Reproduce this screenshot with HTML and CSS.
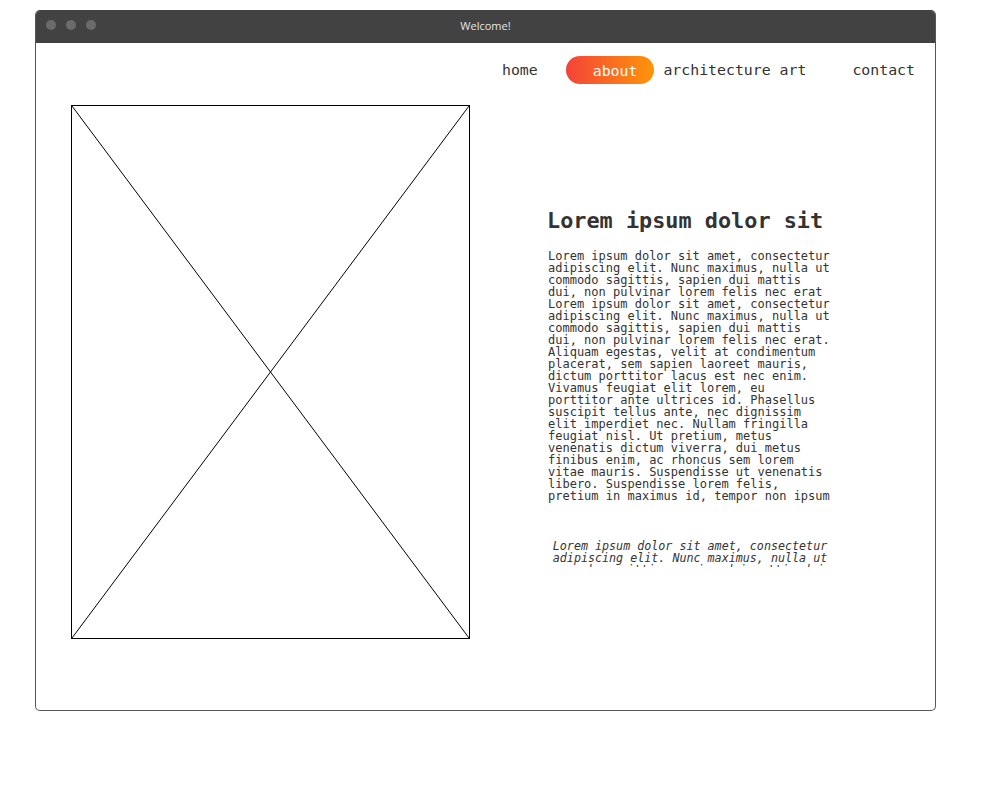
FILE: index.html
```html
<!DOCTYPE html>
<html lang="en">
<head>
<meta charset="utf-8">
<title>Welcome!</title>
<link rel="stylesheet" href="styles.css">
</head>
<body>
<div class="page">
  <div class="window">
    <div class="titlebar">
      <div class="dots"><span class="dot"></span><span class="dot"></span><span class="dot"></span></div>
      <div class="title">Welcome!</div>
    </div>
    <nav class="nav">
      <a class="nav-link home">home</a>
      <a class="nav-link active">about</a>
      <a class="nav-link arch">architecture art</a>
      <a class="nav-link contact">contact</a>
    </nav>
    <main class="main">
      <div class="placeholder">
        <svg class="cross" viewBox="0 0 397 532" preserveAspectRatio="none">
          <line x1="0" y1="0" x2="397" y2="532" stroke="#000" stroke-width="1"/>
          <line x1="397" y1="0" x2="0" y2="532" stroke="#000" stroke-width="1"/>
        </svg>
      </div>
      <section class="content">
        <h1 class="heading">Lorem ipsum dolor sit</h1>
        <p class="text">Lorem ipsum dolor sit amet, consectetur adipiscing elit. Nunc maximus, nulla ut commodo sagittis, sapien dui mattis dui, non pulvinar lorem felis nec erat Lorem ipsum dolor sit amet, consectetur adipiscing elit. Nunc maximus, nulla ut commodo sagittis, sapien dui mattis dui, non pulvinar lorem felis nec erat. Aliquam egestas, velit at condimentum placerat, sem sapien laoreet mauris, dictum porttitor lacus est nec enim. Vivamus feugiat elit lorem, eu porttitor ante ultrices id. Phasellus suscipit tellus ante, nec dignissim elit imperdiet nec. Nullam fringilla feugiat nisl. Ut pretium, metus venenatis dictum viverra, dui metus finibus enim, ac rhoncus sem lorem vitae mauris. Suspendisse ut venenatis libero. Suspendisse lorem felis, pretium in maximus id, tempor non ipsum</p>
        <p class="quote">Lorem ipsum dolor sit amet, consectetur adipiscing elit. Nunc maximus, nulla ut commodo sagittis, sapien dui mattis dui, non pulvinar lorem felis nec erat</p>
      </section>
    </main>
  </div>
</div>
</body>
</html>
```

FILE: styles.css
```css
html, body {
  margin: 0;
  padding: 0;
  background: #fff;
}

.page {
  padding: 10px 0 0 35px;
}

.window {
  box-sizing: border-box;
  width: 901px;
  height: 701px;
  border: 1px solid #555;
  border-top-color: #424242;
  border-radius: 5px;
  overflow: hidden;
  background: #fff;
  font-family: "DejaVu Sans Mono", "Liberation Mono", monospace;
  color: #333;
}

.titlebar {
  position: relative;
  height: 32px;
  background: #424242;
  display: flex;
  align-items: center;
  justify-content: center;
}

.dots {
  position: absolute;
  left: 10px;
  top: 9px;
  display: flex;
  gap: 10px;
}

.dot {
  width: 10px;
  height: 10px;
  border-radius: 50%;
  background: #6b6b6b;
}

.title {
  font-family: "Open Sans", "Noto Sans", sans-serif;
  font-size: 11px;
  color: #e6e6e6;
  margin-top: -4px;
}

.nav {
  display: flex;
  justify-content: flex-end;
  align-items: center;
  padding: 13px 20px 0 0;
  height: 28px;
  font-size: 14.85px;
  line-height: 30px;
}

.nav-link {
  color: #333;
  text-decoration: none;
  white-space: nowrap;
}

.home {
  margin-right: 28px;
}

.active {
  color: #fff;
  padding: 0 17px 0 27px;
  height: 28px;
  line-height: 30px;
  border-radius: 14px;
  background: linear-gradient(90deg, #f4433a, #ff9508);
}

.arch {
  margin-left: 9px;
}

.contact {
  margin-left: 46px;
}

.main {
  display: flex;
  padding: 21px 0 0 35px;
}

.placeholder {
  flex: none;
  width: 397px;
  height: 532px;
  border: 1px solid #000;
}

.cross {
  display: block;
  width: 100%;
  height: 100%;
}

.content {
  padding: 0 0 0 77px;
  width: 286px;
}

.heading {
  margin: 103px 0 16px;
  font-size: 21.85px;
  line-height: 26px;
  font-weight: bold;
  color: #333;
  white-space: nowrap;
}

.text {
  margin: 0 0 0 1px;
  font-size: 12px;
  line-height: 12px;
  color: #333;
}

.quote {
  margin: 38px 0 0;
  font-size: 11.7px;
  line-height: 12px;
  height: 27px;
  overflow: hidden;
  font-style: italic;
  text-align: center;
  color: #333;
}
```
